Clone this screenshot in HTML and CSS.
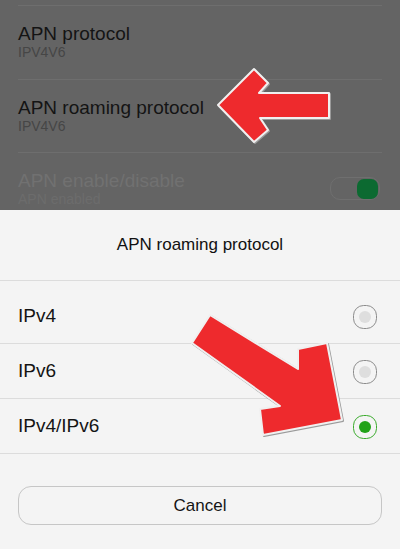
FILE: index.html
```html
<!DOCTYPE html>
<html>
<head>
<meta charset="utf-8">
<link rel="stylesheet" href="styles.css">
</head>
<body>
<div class="screen">
  <div class="settings">
    <div class="item">
      <div class="item-text">
        <div class="item-title">APN protocol</div>
        <div class="item-sub">IPV4V6</div>
      </div>
    </div>
    <div class="item">
      <div class="item-text">
        <div class="item-title">APN roaming protocol</div>
        <div class="item-sub">IPV4V6</div>
      </div>
    </div>
    <div class="item item-disabled">
      <div class="item-text">
        <div class="item-title">APN enable/disable</div>
        <div class="item-sub">APN enabled</div>
      </div>
      <div class="toggle"><div class="knob"></div></div>
    </div>
  </div>
  <div class="sheet">
    <div class="sheet-title">APN roaming protocol</div>
    <div class="options">
      <div class="option">
        <span class="option-label">IPv4</span>
        <span class="radio"><span class="dot"></span></span>
      </div>
      <div class="option">
        <span class="option-label">IPv6</span>
        <span class="radio"><span class="dot"></span></span>
      </div>
      <div class="option">
        <span class="option-label">IPv4/IPv6</span>
        <span class="radio radio-on"><span class="dot"></span></span>
      </div>
    </div>
    <div class="actions">
      <div class="cancel">Cancel</div>
    </div>
  </div>
  <svg class="arrows" width="400" height="549" viewBox="0 0 400 549">
    <g class="arrow-shadow">
      <polygon points="219,106 255,70 269,84 260,94 330,94 330,119 261,119 269,131 255,143"/>
      <polygon points="211,316 299,370 299,350 328,344 343,421 264,436 261,410 281,407 193,344"/>
    </g>
    <g class="arrow-body">
      <polygon points="218,105 254,69 268,83 259,93 329,93 329,118 260,118 268,130 254,142"/>
      <polygon points="210,315 298,369 298,349 327,343 342,420 263,435 260,409 280,406 192,343"/>
    </g>
  </svg>
</div>
</body>
</html>
```
FILE: styles.css
```css
html, body {
  margin: 0;
  padding: 0;
}
body {
  width: 400px;
  height: 549px;
  overflow: hidden;
  font-family: "Liberation Sans", Arial, sans-serif;
}
.screen {
  position: relative;
  width: 400px;
  height: 549px;
  display: flex;
  flex-direction: column;
}
.settings {
  height: 210px;
  background: #646464;
  padding: 5px 18px 0;
  box-sizing: border-box;
  overflow: hidden;
}
.item {
  height: 73.5px;
  box-sizing: border-box;
  border-top: 1px solid #6e6e6e;
  padding-top: 17px;
  display: flex;
  align-items: flex-start;
  justify-content: space-between;
}
.item-title {
  font-size: 19px;
  line-height: 22px;
  color: #141414;
}
.item-sub {
  font-size: 14px;
  line-height: 14px;
  color: #464646;
}
.item-disabled .item-title {
  color: #717171;
}
.item-disabled .item-sub {
  color: #6c6c6c;
}
.toggle {
  width: 50px;
  height: 23px;
  box-sizing: border-box;
  border: 1px solid #6f6f6f;
  border-radius: 10px;
  margin-top: 7px;
  margin-right: 2px;
  display: flex;
  align-items: center;
  justify-content: flex-end;
  padding-right: 1px;
}
.knob {
  width: 21px;
  height: 20px;
  border-radius: 7px;
  background: #0c6a31;
}
.sheet {
  flex: 1;
  background: #f4f4f4;
  display: flex;
  flex-direction: column;
}
.sheet-title {
  height: 70px;
  display: flex;
  align-items: center;
  justify-content: center;
  font-size: 17px;
  line-height: 20px;
  color: #111;
  border-bottom: 1px solid #dcdcdc;
}
.options {
  padding-top: 8px;
}
.option {
  height: 54px;
  border-bottom: 1px solid #dcdcdc;
  display: flex;
  align-items: center;
  justify-content: space-between;
  padding: 0 23px 0 18px;
}
.option-label {
  font-size: 19px;
  color: #141414;
}
.radio {
  width: 24px;
  height: 24px;
  box-sizing: border-box;
  border: 1px solid #8c8c8c;
  border-radius: 44%;
  display: flex;
  align-items: center;
  justify-content: center;
  margin-top: 2px;
}
.radio .dot {
  width: 12px;
  height: 12px;
  border-radius: 50%;
  background: #dedede;
}
.radio-on {
  border-color: #3aab2c;
}
.radio-on .dot {
  background: #22a219;
}
.actions {
  padding: 32px 18px 0;
}
.cancel {
  height: 39px;
  box-sizing: border-box;
  border: 1px solid #c6c6c6;
  border-radius: 13px;
  display: flex;
  align-items: center;
  justify-content: center;
  font-size: 17px;
  color: #141414;
}
.arrows {
  position: absolute;
  left: 0;
  top: 0;
  pointer-events: none;
}
.arrow-shadow polygon {
  fill: #9a9a9a;
  stroke: #9a9a9a;
  stroke-width: 2;
  stroke-linejoin: round;
}
.arrow-body polygon {
  fill: #ee2a2d;
  stroke: #f0f0f0;
  stroke-width: 2;
  stroke-linejoin: round;
}
```
